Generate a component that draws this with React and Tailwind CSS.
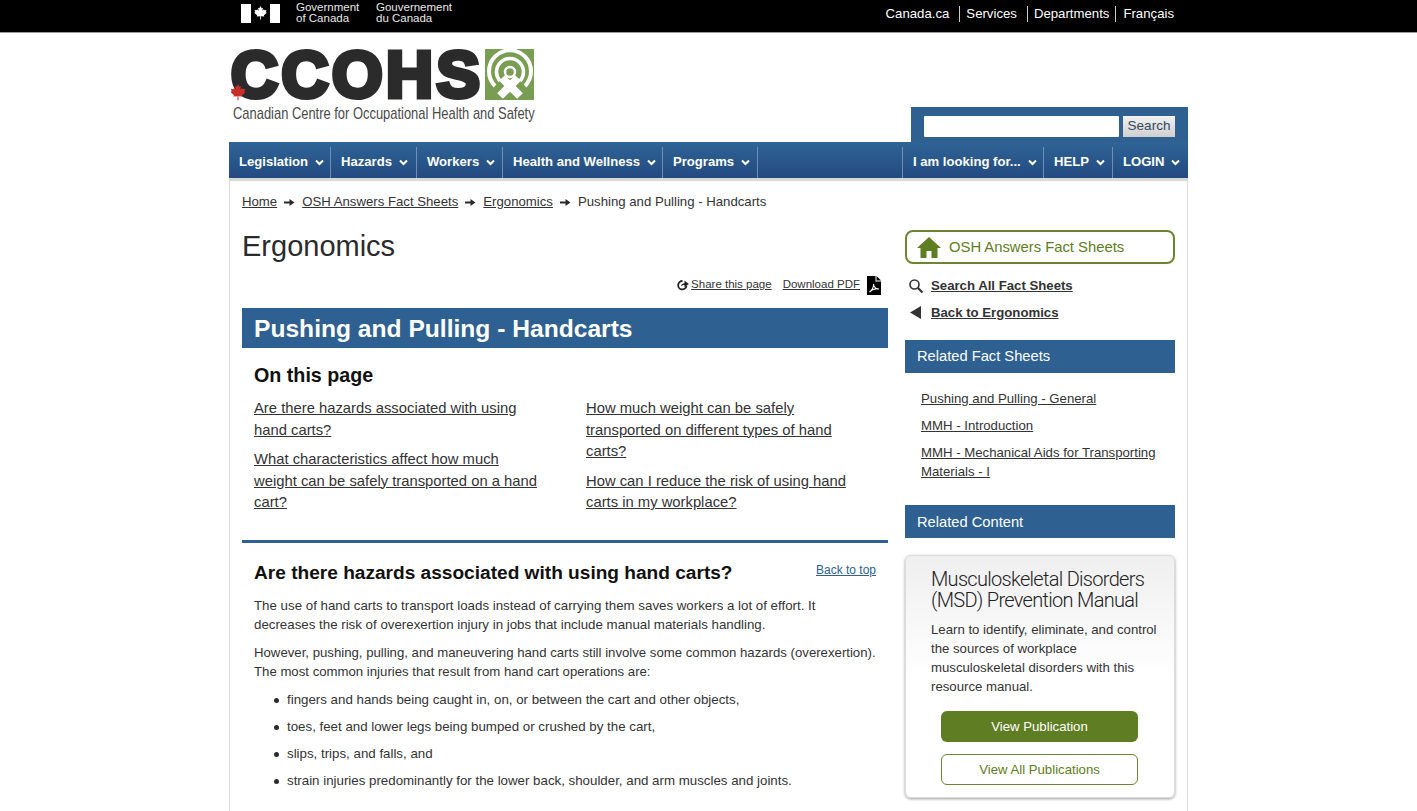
import React from "react";

const Chevron = () => (
  <svg width="9" height="7" viewBox="0 0 9 7" className="ml-[7px] shrink-0">
    <path d="M1 1.5 L4.5 5 L8 1.5" fill="none" stroke="#fff" strokeWidth="2" />
  </svg>
);

const Arrow = () => (
  <svg width="11" height="9" viewBox="0 0 11 9" className="mx-[7px] shrink-0">
    <path d="M0 3.6H5.5V1L10.5 4.5 5.5 8V5.4H0Z" fill="#2b2b2b" />
  </svg>
);

const MapleLeaf = ({ className, fill }) => (
  <svg viewBox="0 0 20 20" className={className}>
    <path
      fill={fill}
      d="M10 0 L11.6 3 L13.2 2.2 L12.5 6.5 L14.6 4.4 L15.2 5.8 L18 5.3 L17 8.2 L18.5 9 L14.5 12.4 L15 14 L10.5 13.5 L10.6 18 H9.4 L9.5 13.5 L5 14 L5.5 12.4 L1.5 9 L3 8.2 L2 5.3 L4.8 5.8 L5.4 4.4 L7.5 6.5 L6.8 2.2 L8.4 3 Z"
    />
  </svg>
);

const NavItem = ({ label, w }) => (
  <div className={`flex h-[31px] items-center whitespace-nowrap border-r border-[#6f8fb4] pb-[1px] pl-[10px] ${w}`}>
    <span className="text-[13.1px] font-bold text-white">{label}</span>
    <Chevron />
  </div>
);

const Crumb = ({ children }) => <a className="underline">{children}</a>;

const Li = ({ children }) => (
  <li className="flex h-[27px] items-center">
    <span className="ml-[20px] mr-[8px] h-[5px] w-[5px] rounded-full bg-[#2b2b2b]" />
    {children}
  </li>
);

export default function App() {
  return (
    <div className="h-[811px] overflow-hidden bg-white text-[#333] font-['Liberation_Sans',Arial,sans-serif]">
      {/* Government bar */}
      <div className="h-[33px] border-b border-[#9a9a9a] bg-black">
        <div className="mx-auto flex h-[32px] w-[959px] items-center justify-between">
          <div className="flex items-center pb-[6px] pl-[12px]">
            <div className="flex h-[19px] w-[39px] items-stretch bg-white">
              <div className="w-[10px] bg-white" />
              <div className="flex flex-1 items-center justify-center bg-black">
                <MapleLeaf className="h-[15px] w-[15px]" fill="#fff" />
              </div>
              <div className="w-[10px] bg-white" />
            </div>
            <div className="ml-[16px] w-[80px] text-[11.5px] leading-[11.5px] text-[#e8e8e8]">
              Government<br />of Canada
            </div>
            <div className="text-[11.5px] leading-[11.5px] text-[#e8e8e8]">
              Gouvernement<br />du Canada
            </div>
          </div>
          <div className="flex items-center pb-[5px] pr-[14px] text-[13.2px] text-white">
            <span className="border-r border-[#ccc] pr-[10px] leading-[16px]">Canada.ca</span>
            <span className="border-r border-[#ccc] pl-[6px] pr-[10px] leading-[16px]">Services</span>
            <span className="border-r border-[#ccc] px-[6px] leading-[16px]">Departments</span>
            <span className="pl-[7px] leading-[16px]">Français</span>
          </div>
        </div>
      </div>

      <div className="mx-auto w-[959px]">
        {/* Header */}
        <div className="flex h-[109px] items-start justify-between">
          <div className="relative mt-[16px] h-[75px] w-[306px]">
            <div className="flex h-[51px] items-center">
              <span className="ml-[2px] w-[254px] text-[65px] font-bold leading-[51px] tracking-[3.5px] text-[#2b2b2b] [-webkit-text-stroke:5px_#2b2b2b]">
                CCOHS
              </span>
              <svg viewBox="0 0 49 51" className="h-[51px] w-[49px] shrink-0">
                <rect width="49" height="51" fill="#7a9d54" />
                <path d="M10 37 A21 21 0 1 1 40 37" fill="none" stroke="#fff" strokeWidth="4" />
                <path d="M15 32 A13.5 13.5 0 1 1 35 32" fill="none" stroke="#fff" strokeWidth="3.5" />
                <path d="M15 47 L33 29 M35 47 L17 29" stroke="#fff" strokeWidth="8" />
                <circle cx="25" cy="23" r="5" fill="#7a9d54" stroke="#fff" strokeWidth="2.5" />
              </svg>
            </div>
            <MapleLeaf className="absolute left-0 top-[35px] h-[18px] w-[18px]" fill="#c8302c" />
            <div className="ml-[4px] mt-[4px] origin-left scale-x-[0.76] whitespace-nowrap text-[17px] leading-[20px] text-[#4a4a4a]">
              Canadian Centre for Occupational Health and Safety
            </div>
          </div>
          <div className="mt-[74px] flex h-[35px] w-[277px] items-start bg-[#2e6091] pl-[13px] pt-[9px]">
            <div className="h-[21px] w-[195px] rounded-[1px] bg-white" />
            <div className="ml-[4px] flex h-[21px] w-[52px] items-center justify-center bg-gradient-to-b from-[#f2f2f2] to-[#cfcfcf] text-[13.5px] text-[#34495e]">
              Search
            </div>
          </div>
        </div>

        {/* Nav */}
        <div className="flex h-[36px] items-end justify-between bg-gradient-to-b from-[#2f6496] to-[#244a80]">
          <div className="flex">
            <NavItem label="Legislation" w="w-[102px]" />
            <NavItem label="Hazards" w="w-[86px]" />
            <NavItem label="Workers" w="w-[86px]" />
            <NavItem label="Health and Wellness" w="w-[160px]" />
            <NavItem label="Programs" w="w-[95px]" />
          </div>
          <div className="flex whitespace-nowrap">
            <div className="flex h-[31px] w-[142px] items-center border-x border-[#6f8fb4] pb-[1px] pl-[10px]">
              <span className="text-[13.1px] font-bold text-white">I am looking for...</span>
              <Chevron />
            </div>
            <div className="flex h-[31px] w-[69px] items-center border-r border-[#6f8fb4] pb-[1px] pl-[10px]">
              <span className="text-[13.1px] font-bold text-white">HELP</span>
              <Chevron />
            </div>
            <div className="flex h-[31px] w-[75px] items-center pb-[1px] pl-[10px]">
              <span className="text-[13.1px] font-bold text-white">LOGIN</span>
              <Chevron />
            </div>
          </div>
        </div>

        {/* Body */}
        <div className="h-[640px] border-x border-t-[3px] border-x-[#dcdcdc] border-t-[#d8d8d8] px-[12px]">
          <div className="flex h-[39px] items-center pt-[3px] text-[13.2px]">
            <Crumb>Home</Crumb>
            <Arrow />
            <Crumb>OSH Answers Fact Sheets</Crumb>
            <Arrow />
            <Crumb>Ergonomics</Crumb>
            <Arrow />
            <span>Pushing and Pulling - Handcarts</span>
          </div>

          <div className="flex justify-between">
            {/* Main */}
            <div className="w-[646px]">
              <h1 className="mt-[8px] text-[29px] leading-[36px] text-[#2b2b2b]">Ergonomics</h1>
              <div className="mt-[10px] flex h-[22px] items-center justify-end pr-[7px] text-[11.5px]">
                <svg width="12" height="12" viewBox="0 0 12 12" className="mr-[2px]">
                  <path d="M9.5 7A4.2 4.2 0 1 1 5.5 2" fill="none" stroke="#222" strokeWidth="1.8" />
                  <path d="M4 7.5C4 5.5 5.5 4.2 7.5 4.2V1.5L11.8 5 7.5 8.3V6C6 6 5 6.3 4 7.5Z" fill="#222" />
                </svg>
                <a className="underline">Share this page</a>
                <a className="ml-[11px] underline">Download PDF</a>
                <svg width="14" height="19" viewBox="0 0 14 19" className="ml-[7px]">
                  <path d="M0 0H8.5V5.5H14V19H0Z" fill="#000" />
                  <path d="M9.5 0L14 4.5H9.5Z" fill="#000" />
                  <path d="M2.5 16C5 14.5 7 11 6.5 8C6.5 10.5 9 13.5 12 13C9 12.5 5 13.5 2.5 16Z" fill="none" stroke="#fff" strokeWidth="1.1" />
                </svg>
              </div>

              <h2 className="mt-[12px] flex h-[40px] items-center bg-[#2e6091] px-[12px] pt-[2px] text-[24.6px] font-bold text-white">
                Pushing and Pulling - Handcarts
              </h2>

              <div className="border-b-[3px] border-[#2e6091] px-[12px] pb-[26px]">
                <h3 className="mt-[13px] text-[19.7px] font-bold leading-[28px] text-[#111]">On this page</h3>
                <div className="mt-[9px] grid grid-cols-[332px_1fr] text-[14.8px] leading-[21.5px]">
                  <div className="w-[290px]">
                    <a className="block underline">Are there hazards associated with using hand carts?</a>
                    <a className="mt-[8px] block underline">What characteristics affect how much weight can be safely transported on a hand cart?</a>
                  </div>
                  <div className="w-[275px]">
                    <a className="block underline">How much weight can be safely transported on different types of hand carts?</a>
                    <a className="mt-[8px] block underline">How can I reduce the risk of using hand carts in my workplace?</a>
                  </div>
                </div>
              </div>

              <div className="px-[12px] text-[13.3px]">
                <div className="mt-[16px] flex items-center justify-between">
                  <h3 className="text-[19.1px] font-bold leading-[28px] text-[#111]">Are there hazards associated with using hand carts?</h3>
                  <a className="mb-[5px] text-[12px] text-[#2e6091] underline">Back to top</a>
                </div>
                <p className="mt-[9px] leading-[19px]">
                  The use of hand carts to transport loads instead of carrying them saves workers a lot of effort. It decreases the risk of overexertion injury in jobs that include manual materials handling.
                </p>
                <p className="-mr-[2px] mt-[9px] text-[13.2px] leading-[19px]">
                  However, pushing, pulling, and maneuvering hand carts still involve some common hazards (overexertion). The most common injuries that result from hand cart operations are:
                </p>
                <ul className="mt-[6px]">
                  <Li>fingers and hands being caught in, on, or between the cart and other objects,</Li>
                  <Li>toes, feet and lower legs being bumped or crushed by the cart,</Li>
                  <Li>slips, trips, and falls, and</Li>
                  <Li>strain injuries predominantly for the lower back, shoulder, and arm muscles and joints.</Li>
                </ul>
              </div>
            </div>

            {/* Sidebar */}
            <div className="w-[270px] text-[13.2px]">
              <div className="mt-[10px] flex h-[34px] items-center rounded-[8px] border-2 border-[#6c8433] pl-[10px] text-[14.8px] text-[#5f7d22]">
                <svg width="24" height="21" viewBox="0 0 24 21">
                  <path d="M12 0 L24 11 H20.5 V21 H14.5 V14 H9.5 V21 H3.5 V11 H0 Z" fill="#5f7d22" />
                </svg>
                <span className="ml-[8px]">OSH Answers Fact Sheets</span>
              </div>
              <div className="mt-[8px] flex h-[27px] items-center font-bold">
                <svg width="16" height="16" viewBox="0 0 16 16" className="ml-[3px] mr-[7px]">
                  <circle cx="6.5" cy="6.5" r="4.5" fill="none" stroke="#333" strokeWidth="1.6" />
                  <path d="M10 10 L14.5 14.5" stroke="#333" strokeWidth="2.2" />
                </svg>
                <a className="underline">Search All Fact Sheets</a>
              </div>
              <div className="flex h-[27px] items-center font-bold">
                <svg width="11" height="13" viewBox="0 0 11 13" className="ml-[5px] mr-[10px]">
                  <path d="M11 0V13L0 6.5Z" fill="#333" />
                </svg>
                <a className="underline">Back to Ergonomics</a>
              </div>
              <div className="mt-[14px] flex h-[33px] items-center bg-[#2e6091] px-[12px] text-[14.7px] text-white">
                Related Fact Sheets
              </div>
              <div className="mt-[16px] pl-[16px]">
                <a className="block leading-[19px] underline">Pushing and Pulling - General</a>
                <a className="mt-[8px] block leading-[19px] underline">MMH - Introduction</a>
                <a className="mt-[8px] block leading-[19px] underline">MMH - Mechanical Aids for Transporting Materials - I</a>
              </div>
              <div className="mt-[24px] flex h-[33px] items-center bg-[#2e6091] px-[12px] pt-[1px] text-[14.7px] text-white">
                Related Content
              </div>
              <div className="mt-[17px] h-[243px] rounded-[6px] border border-[#dcdcdc] bg-gradient-to-b from-[#efefef] via-white to-white pl-[25px] pt-[13px] shadow-[0_1px_3px_rgba(0,0,0,0.4)]">
                <div className="whitespace-nowrap font-['Roboto'] text-[20px] font-light leading-[21px] tracking-[-0.7px] text-[#222]">
                  <div className="h-[21px]">Musculoskeletal Disorders</div>
                  <div className="h-[21px]">(MSD) Prevention Manual</div>
                </div>
                <p className="mt-[9px] w-[232px] leading-[19px]">
                  Learn to identify, eliminate, and control the sources of workplace musculoskeletal disorders with this resource manual.
                </p>
                <div className="ml-[10px] mt-[15px] flex h-[31px] w-[197px] items-center justify-center rounded-[6px] bg-[#5f7d22] text-white">
                  View Publication
                </div>
                <div className="ml-[10px] mt-[12px] flex h-[31px] w-[197px] items-center justify-center rounded-[6px] border border-[#6c8433] bg-white text-[#5f7d22]">
                  View All Publications
                </div>
              </div>
            </div>
          </div>
        </div>
      </div>
    </div>
  );
}
